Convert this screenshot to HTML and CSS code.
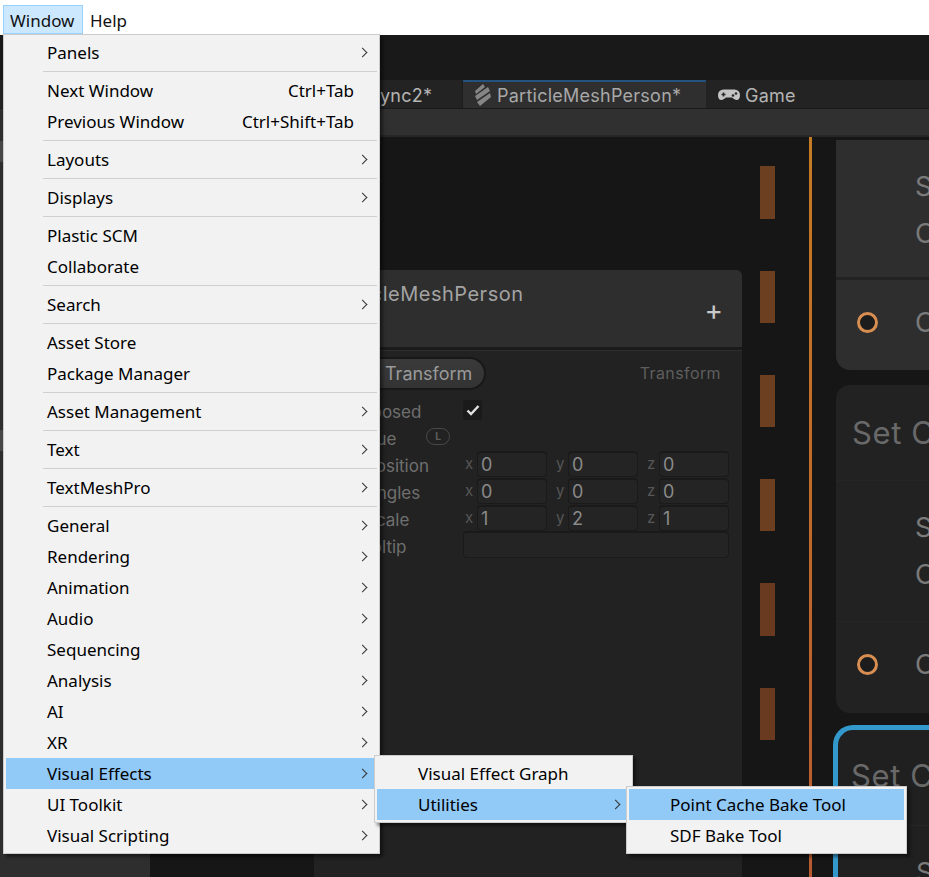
FILE: index.html
```html
<!DOCTYPE html>
<html>
<head>
  <title>Window menu</title>
  <link rel="stylesheet" href="styles.css">
</head>
<body>

<div class="menubar">
  <div class="menubar-item active">Window</div>
  <div class="menubar-item">Help</div>
</div>

<div class="editor">
  <div class="strip"></div>
  <div class="tabbar">
    <div class="tab tab-sync">ync2*</div>
    <div class="tab tab-active">
      <svg class="tab-icon" width="17" height="23" viewBox="0 0 17 23">
        <path d="M9 0 L11 3 L2 10 L1 7 Z M14 3 L16 7 L3 16 L1 12 Z M16 9 L17 13 L6 22 L3 18 Z" fill="#858585"/>
      </svg>
      <span>ParticleMeshPerson*</span>
    </div>
    <div class="tab tab-game">
      <svg class="tab-icon" width="22" height="12" viewBox="0 0 22 12">
        <path d="M5.5 .5 H16.5 A5.5 5.5 0 0 1 22 6 C22 11 19 12 16 10 L14 8.5 H8 L6 10 C3 12 0 11 0 6 A5.5 5.5 0 0 1 5.5 .5 Z" fill="#c4c4c4"/>
        <path d="M3.5 5.5h4M5.5 3.5v4" stroke="#2a2a2a" stroke-width="1.6"/>
        <circle cx="15" cy="6.5" r="1.3" fill="#2a2a2a"/>
        <circle cx="18" cy="4.5" r="1.3" fill="#2a2a2a"/>
      </svg>
      <span>Game</span>
    </div>
  </div>
  <div class="toolbar"></div>

  <div class="canvas">
    <div class="flow flow-a"></div><div class="flow flow-b"></div><div class="flow flow-c"></div>
    <div class="flow flow-d"></div><div class="flow flow-e"></div><div class="flow flow-f"></div>
    <div class="wire"></div>

    <div class="panel">
      <div class="panel-head">
        <span class="panel-title">ParticleMeshPerson</span>
        <span class="panel-plus">+</span>
      </div>
      <div class="panel-body">
        <div class="prop-top">
          <span class="pill">Transform</span>
          <span class="prop-type">Transform</span>
        </div>
        <div class="prop-row">
          <span class="prop-label">Exposed</span>
          <span class="check">
            <svg width="14" height="12" viewBox="0 0 14 12"><path d="M1.5 6.5 L5 10 L12.5 2" fill="none" stroke="#e0e0e0" stroke-width="2.4"/></svg>
          </span>
        </div>
        <div class="prop-row">
          <span class="prop-label">Value</span>
          <span class="lock">L</span>
        </div>
        <div class="prop-row">
          <span class="prop-label prop-label-sub">Position</span>
          <div class="vector">
            <span class="axis">x</span><span class="field">0</span>
            <span class="axis">y</span><span class="field">0</span>
            <span class="axis">z</span><span class="field">0</span>
          </div>
        </div>
        <div class="prop-row">
          <span class="prop-label prop-label-sub">Angles</span>
          <div class="vector">
            <span class="axis">x</span><span class="field">0</span>
            <span class="axis">y</span><span class="field">0</span>
            <span class="axis">z</span><span class="field">0</span>
          </div>
        </div>
        <div class="prop-row">
          <span class="prop-label prop-label-sub">Scale</span>
          <div class="vector">
            <span class="axis">x</span><span class="field">1</span>
            <span class="axis">y</span><span class="field">2</span>
            <span class="axis">z</span><span class="field">1</span>
          </div>
        </div>
        <div class="prop-row">
          <span class="prop-label">Tooltip</span>
          <span class="field field-wide"></span>
        </div>
      </div>
    </div>

    <div class="node node-one">
      <div class="node-mid"><span class="node-s">S</span><span class="node-c">C</span></div>
      <div class="node-port"><span class="port"></span><span class="node-c">C</span></div>
    </div>
    <div class="node node-two">
      <div class="node-title">Set C</div>
      <div class="node-mid"><span class="node-s">S</span><span class="node-c">C</span></div>
      <div class="node-port"><span class="port"></span><span class="node-c">C</span></div>
    </div>
    <div class="node node-three">
      <div class="node-title">Set C</div>
      <div class="node-mid"><span class="node-s">S</span></div>
    </div>
  </div>
</div>

<div class="sidebar">
  <div class="side-band"></div>
  <div class="side-band side-band-low"></div>
</div>

<div class="menu menu-main">
  <div class="item"><span>Panels</span><i class="arrow"></i></div>
  <div class="sep"></div>
  <div class="item"><span>Next Window</span><span class="key">Ctrl+Tab</span></div>
  <div class="item"><span>Previous Window</span><span class="key">Ctrl+Shift+Tab</span></div>
  <div class="sep"></div>
  <div class="item"><span>Layouts</span><i class="arrow"></i></div>
  <div class="sep"></div>
  <div class="item"><span>Displays</span><i class="arrow"></i></div>
  <div class="sep"></div>
  <div class="item"><span>Plastic SCM</span></div>
  <div class="item"><span>Collaborate</span></div>
  <div class="sep"></div>
  <div class="item"><span>Search</span><i class="arrow"></i></div>
  <div class="sep"></div>
  <div class="item"><span>Asset Store</span></div>
  <div class="item"><span>Package Manager</span></div>
  <div class="sep"></div>
  <div class="item"><span>Asset Management</span><i class="arrow"></i></div>
  <div class="sep"></div>
  <div class="item"><span>Text</span><i class="arrow"></i></div>
  <div class="sep"></div>
  <div class="item"><span>TextMeshPro</span><i class="arrow"></i></div>
  <div class="sep"></div>
  <div class="item"><span>General</span><i class="arrow"></i></div>
  <div class="item"><span>Rendering</span><i class="arrow"></i></div>
  <div class="item"><span>Animation</span><i class="arrow"></i></div>
  <div class="item"><span>Audio</span><i class="arrow"></i></div>
  <div class="item"><span>Sequencing</span><i class="arrow"></i></div>
  <div class="item"><span>Analysis</span><i class="arrow"></i></div>
  <div class="item"><span>AI</span><i class="arrow"></i></div>
  <div class="item"><span>XR</span><i class="arrow"></i></div>
  <div class="item selected"><span>Visual Effects</span><i class="arrow"></i></div>
  <div class="item"><span>UI Toolkit</span><i class="arrow"></i></div>
  <div class="item"><span>Visual Scripting</span><i class="arrow"></i></div>
</div>

<div class="menu menu-sub">
  <div class="item"><span>Visual Effect Graph</span></div>
  <div class="item selected"><span>Utilities</span><i class="arrow"></i></div>
</div>

<div class="menu menu-tool">
  <div class="item selected"><span>Point Cache Bake Tool</span></div>
  <div class="item"><span>SDF Bake Tool</span></div>
</div>

</body>
</html>
```

FILE: styles.css
```css
html, body {
  margin: 0;
  height: 877px;
  overflow: hidden;
}

body {
  background-color: #161616;
  font-family: "Noto Sans", sans-serif;
  position: relative;
}

/* menu bar */
.menubar {
  height: 35px;
  background: #fff;
  display: flex;
  box-sizing: border-box;
  padding: 5px 0 0 3px;
}

.menubar-item {
  font-size: 17px;
  line-height: 29px;
  height: 29px;
  padding: 0 6px;
  color: #111;
  box-sizing: border-box;
  border: 1px solid transparent;
}

.menubar-item.active {
  background: #cce8ff;
  border-color: #99d1ff;
  width: 80px;
  line-height: 30px;
}

/* editor behind the menu */
.editor {
  height: 842px;
  display: flex;
  flex-direction: column;
  color: #bdbdbd;
  font-family: Inter, sans-serif;
}

.strip {
  height: 45px;
  background: #191919;
}

.tabbar {
  height: 28px;
  background: #232323;
  display: flex;
  padding-left: 380px;
  flex: none;
}

.tab {
  font-size: 18px;
  letter-spacing: 0.25px;
  padding-top: 2px;
  box-sizing: border-box;
  display: flex;
  align-items: center;
}

.tab-sync {
  width: 83px;
  color: #b5b5b5;
  border-right: 1px solid #1c1c1c;
}

.tab-active {
  width: 243px;
  background: #2f2f2f;
  border-top: 2px solid #24527f;
  padding-top: 0;
  padding-left: 11px;
  gap: 6px;
  color: #a8a8a8;
}

.tab-game {
  padding-left: 12px;
  gap: 5px;
  color: #b5b5b5;
}

.toolbar {
  height: 29px;
  flex: none;
  background: #303030;
  border-top: 1px solid #1a1a1a;
  box-sizing: border-box;
  border-bottom: 2px solid #262626;
}

.canvas {
  flex: 1;
  position: relative;
  background: #161616;
  overflow: hidden;
}

/* left column, only its edge shows beside the menu */
.sidebar {
  position: absolute;
  left: 0;
  top: 113px;
  bottom: 0;
  width: 150px;
  background: #2e2e2e;
  padding-top: 28px;
  box-sizing: border-box;
}

.side-band {
  height: 21px;
  background: #474747;
}

.side-band-low {
  margin-top: 268px;
}

/* flow connection dashes */
.flow {
  position: absolute;
  left: 760px;
  width: 15px;
  height: 52px;
  background: #6b3f20;
}

.flow-a { top: 29px; height: 53px; }
.flow-b { top: 134px; }
.flow-c { top: 238px; }
.flow-d { top: 342px; }
.flow-e { top: 446px; height: 53px; background: #693a20; }
.flow-f { top: 551px; background: #693a20; }

.wire {
  position: absolute;
  left: 809px;
  top: 0;
  bottom: 0;
  width: 3px;
  background: linear-gradient(#c57a24, #c06a2a 50%, #b85a30);
}

/* blackboard panel */
.panel {
  position: absolute;
  left: 314px;
  top: 133px;
  width: 428px;
  bottom: 0;
  background: #222;
  border-radius: 6px 6px 0 0;
}

.panel-head {
  height: 77px;
  background: #2e2e2e;
  border-bottom: 3px solid #1a1a1a;
  border-radius: 6px 6px 0 0;
  position: relative;
}

.panel-title {
  position: absolute;
  left: 11px;
  top: 12px;
  font-size: 20px;
  letter-spacing: 0.5px;
  color: #a3a3a3;
}

.panel-plus {
  position: absolute;
  right: 19px;
  top: 24px;
  font-size: 28px;
  line-height: 32px;
  color: #c8c8c8;
}

.panel-body {
  border-top: 1px solid #2e2e2e;
  padding-top: 6px;
  font-size: 17px;
  color: #6f6f6f;
}

.prop-top {
  height: 33px;
  display: flex;
  justify-content: space-between;
  align-items: center;
  padding-right: 21px;
  margin-bottom: 6px;
}

.pill {
  background: linear-gradient(#3a3a3a, #333);
  border: 2px solid #181818;
  border-left: none;
  border-radius: 0 17px 17px 0;
  color: #9a9a9a;
  font-size: 18px;
  line-height: 29px;
  padding: 0 12px 0 71px;
}

.prop-type {
  color: #5e5e5e;
  font-size: 16px;
  letter-spacing: 0.4px;
  position: relative;
  top: -1px;
}

.prop-row {
  height: 27px;
  display: flex;
  align-items: center;
}

.prop-label {
  width: 149px;
  flex: none;
  box-sizing: border-box;
  padding-left: 38px;
  color: #6f6f6f;
  position: relative;
  top: 2px;
}

.prop-label-sub {
  padding-left: 51px;
}

.check {
  width: 19px;
  height: 20px;
  background: #1a1a1a;
  border-radius: 3px;
  display: flex;
  align-items: center;
  justify-content: center;
}

.lock {
  width: 24px;
  height: 17px;
  box-sizing: border-box;
  border: 1px solid #4a4a4a;
  border-radius: 9px;
  color: #5e5e5e;
  font-size: 10px;
  font-weight: 700;
  line-height: 15px;
  text-align: center;
  margin-left: -37px;
}

.vector {
  display: flex;
  align-items: center;
}

.axis {
  width: 14px;
  font-size: 15px;
  color: #565656;
  padding-left: 2px;
  box-sizing: border-box;
}

.field + .axis {
  margin-left: 7px;
}

.field {
  width: 70px;
  height: 26px;
  box-sizing: border-box;
  background: #242424;
  border: 1px solid #1a1a1a;
  border-top-width: 2px;
  border-radius: 4px;
  color: #8a8a8a;
  font-size: 18px;
  line-height: 24px;
  padding-left: 3px;
}

.field-wide {
  width: 266px;
  height: 27px;
}

/* graph nodes on the right */
.node {
  position: absolute;
  left: 836px;
  right: 0;
  box-sizing: border-box;
  color: #7a7a7a;
  font-size: 27px;
  border-radius: 14px 0 0 14px;
  overflow: hidden;
}

.node-s, .node-c {
  position: absolute;
  left: 79px;
  line-height: 36px;
}

.node-mid {
  position: relative;
  height: 140px;
  border-top: 1px solid #262626;
  border-bottom: 1px solid #262626;
}

.node-s { top: 29px; }
.node-c { top: 76px; }

.node-port {
  position: relative;
  height: 87px;
}

.node-port .node-c { top: 25px; }

.port {
  position: absolute;
  left: 21px;
  top: 32px;
  width: 15px;
  height: 15px;
  border: 3px solid #d98e51;
  border-radius: 50%;
  background: #1c1c1c;
}

.node-title {
  height: 95px;
  box-sizing: border-box;
  padding: 26px 0 0 16px;
  font-size: 31px;
  line-height: 44px;
  color: #696969;
  letter-spacing: 0.6px;
  white-space: nowrap;
}

.node-one {
  top: 3px;
  height: 230px;
  background: #2e2e2e;
  border-radius: 0 0 0 14px;
}

.node-one .node-mid {
  height: 137px;
  border-top: none;
  border-bottom: 3px solid #222;
}

.node-two {
  top: 248px;
  height: 328px;
  background: #222;
}

.node-three {
  left: 833px;
  top: 588px;
  height: 152px;
  background: #202020;
  border: 5px solid #3399cc;
  border-width: 5px 0 0 5px;
  border-radius: 20px 0 0 0;
}

.node-three .node-title {
  padding: 24px 0 0 13px;
}

.node-three .node-s { top: 29px; left: 78px; }

/* windows style popup menus */
.menu {
  position: absolute;
  background: #f2f2f2;
  border: 1px solid #cccccc;
  padding: 2px;
  box-sizing: border-box;
  box-shadow: 3px 3px 3px rgba(0, 0, 0, 0.45);
  color: #000;
  font-size: 17px;
}

.menu-main {
  left: 3px;
  top: 34px;
  width: 377px;
  height: 820px;
}

.menu-sub {
  left: 374px;
  top: 755px;
  width: 259px;
  height: 68px;
}

.menu-tool {
  left: 626px;
  top: 786px;
  width: 281px;
  height: 68px;
}

.item {
  height: 31px;
  box-sizing: border-box;
  padding: 0 23px 0 41px;
  display: flex;
  align-items: center;
  justify-content: space-between;
  position: relative;
}

.item.selected {
  background: #91c9f7;
}

.arrow {
  position: absolute;
  right: 11px;
  top: 12px;
  width: 6px;
  height: 6px;
  border-top: 1.3px solid #333;
  border-right: 1.3px solid #333;
  transform: rotate(45deg);
}

.sep {
  height: 1px;
  margin: 3px 0 3px 37px;
  background: #d0d0d0;
}
```
